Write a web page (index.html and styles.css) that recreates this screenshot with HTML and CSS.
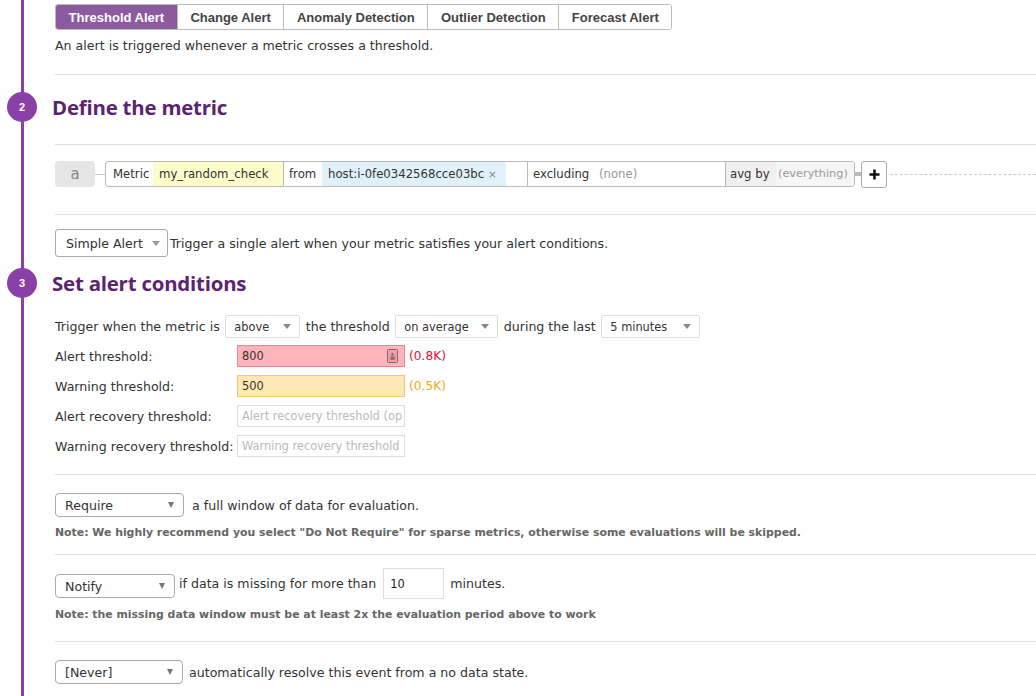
FILE: index.html
```html
<!DOCTYPE html>
<html>
<head>
<meta charset="utf-8">
<link rel="stylesheet" href="styles.css">
</head>
<body>
<div class="page">
  <div class="tabs">
    <button class="tab active">Threshold Alert</button>
    <button class="tab">Change Alert</button>
    <button class="tab">Anomaly Detection</button>
    <button class="tab">Outlier Detection</button>
    <button class="tab">Forecast Alert</button>
  </div>
  <p class="desc">An alert is triggered whenever a metric crosses a threshold.</p>
  <hr class="sep s1">

  <h2 class="step s2"><span class="num">2</span>Define the metric</h2>
  <hr class="sep s3">

  <div class="query">
    <span class="qname">a</span>
    <span class="qlink"></span>
    <div class="qbox">
      <span class="seg lbl-metric">Metric</span>
      <span class="seg metric">my_random_check</span>
      <span class="seg from">from</span>
      <span class="seg host">host:i-0fe0342568cce03bc <span class="x">×</span></span>
      <span class="seg blank"></span>
      <span class="seg excl">excluding <span class="muted">(none)</span></span>
      <span class="seg avg">avg by</span>
      <span class="seg ev">(everything)</span>
    </div>
    <span class="qlink2"></span>
    <button class="plus"><svg width="11" height="11" viewBox="0 0 11 11"><path d="M5.5 0.5v10M0.5 5.5h10" stroke="#111" stroke-width="2.6"/></svg></button>
    <span class="dash"></span>
  </div>
  <hr class="sep s4">

  <div class="typerow">
    <div class="sel sel-lg"><span>Simple Alert</span><span class="caret c-light"></span></div>
    <span>Trigger a single alert when your metric satisfies your alert conditions.</span>
  </div>

  <h2 class="step s5"><span class="num">3</span>Set alert conditions</h2>

  <div class="trigger">
    <span>Trigger when the metric is</span>
    <div class="sel sel-sm w-above"><span>above</span><span class="caret"></span></div>
    <span>the threshold</span>
    <div class="sel sel-sm w-avg"><span>on average</span><span class="caret"></span></div>
    <span>during the last</span>
    <div class="sel sel-sm w-min"><span>5 minutes</span><span class="caret"></span></div>
  </div>

  <div class="thresholds">
    <label>Alert threshold:</label>
    <div class="tcell">
      <div class="tin alert"><span>800</span>
        <svg class="kicon" width="11" height="14" viewBox="0 0 11 14"><rect x="0.5" y="0.5" width="10" height="13" rx="1" fill="#e9a0a8" stroke="#8a6a6e"/><path d="M5.5 3.2 L7.2 6.8 H3.8 Z" fill="#8a6a6e"/><rect x="3.3" y="7.6" width="4.4" height="3.2" fill="#8a6a6e"/></svg>
      </div>
      <span class="hint red">(0.8K)</span>
    </div>
    <label>Warning threshold:</label>
    <div class="tcell">
      <div class="tin warn"><span>500</span></div>
      <span class="hint orange">(0.5K)</span>
    </div>
    <label>Alert recovery threshold:</label>
    <div class="tcell">
      <div class="tin empty"><span>Alert recovery threshold (op</span></div>
    </div>
    <label>Warning recovery threshold:</label>
    <div class="tcell">
      <div class="tin empty"><span>Warning recovery threshold</span></div>
    </div>
  </div>
  <hr class="sep s6">

  <div class="optrow r-require">
    <div class="sel sel-md w-require"><span>Require</span><span class="caret c-dark"></span></div>
    <span>a full window of data for evaluation.</span>
  </div>
  <p class="note">Note: We highly recommend you select "Do Not Require" for sparse metrics, otherwise some evaluations will be skipped.</p>
  <hr class="sep s7">

  <div class="optrow r-notify">
    <div class="sel sel-md w-notify"><span>Notify</span><span class="caret c-dark"></span></div>
    <span>if data is missing for more than</span>
    <div class="numin">10</div>
    <span>minutes.</span>
  </div>
  <p class="note">Note: the missing data window must be at least 2x the evaluation period above to work</p>
  <hr class="sep s8">

  <div class="optrow r-never">
    <div class="sel sel-md w-never"><span>[Never]</span><span class="caret c-dark"></span></div>
    <span>automatically resolve this event from a no data state.</span>
  </div>
</div>
</body>
</html>
```

FILE: styles.css
```css
* { box-sizing: border-box; }
html, body { margin: 0; background: #fff; }
body {
  font-family: "DejaVu Sans", "Liberation Sans", sans-serif;
  font-size: 12.6px;
  color: #333;
}
.page {
  padding: 4px 0 0 55px;
  height: 696px;
  overflow: hidden;
  background: linear-gradient(#8b3fa8, #8b3fa8) no-repeat 21px 0 / 3px 100%;
}

/* tabs */
.tabs {
  display: inline-flex;
  border: 1px solid #bbb;
  border-radius: 3px;
  height: 26px;
  overflow: hidden;
}
.tab {
  font: bold 13px "Liberation Sans", Arial, sans-serif;
  color: #444;
  background: #fff;
  border: 0;
  border-left: 1px solid #bbb;
  padding: 0 12.6px;
  height: 24px;
  margin: 0;
}
.tab:first-child { border-left: 0; }
.tab.active { background: #8c5a9f; color: #fff; }

.desc { margin: 8px 0 0; line-height: 16px; }

.sep { border: 0; border-top: 1px solid #ddd; margin: 0; height: 0; }
.s1 { margin-top: 20px; }
.s3 { margin-top: 22px; }
.s4 { margin-top: 27px; }
.s6 { margin-top: 17px; }
.s7 { margin-top: 13px; }
.s8 { margin-top: 18px; }

/* step headings */
.step {
  display: flex;
  align-items: center;
  gap: 15px;
  margin: 0 0 0 -48px;
  height: 30px;
  font: 700 20.4px "Open Sans", sans-serif;
  color: #5a2471;
  letter-spacing: -0.2px;
}
.s2 { margin-top: 17px; }
.s5 { margin-top: 11px; }
.num {
  width: 30px;
  height: 30px;
  border-radius: 50%;
  background: #8b3fa8;
  color: #fff;
  font: bold 11px "Liberation Sans", Arial, sans-serif;
  display: flex;
  align-items: center;
  justify-content: center;
  letter-spacing: 0;
}

/* query builder */
.query {
  display: flex;
  align-items: center;
  height: 26px;
  margin-top: 16px;
  font-size: 11.7px;
}
.qname {
  width: 40px;
  height: 26px;
  background: #e6e6e6;
  border-radius: 4px;
  color: #888;
  font-size: 15px;
  display: flex;
  align-items: center;
  justify-content: center;
}
.qlink { width: 10px; height: 1px; background: #ccc; }
.qbox {
  display: flex;
  height: 26px;
  border: 1px solid #bbb;
  border-radius: 3px;
  overflow: hidden;
}
.seg {
  height: 24px;
  line-height: 24px;
  white-space: nowrap;
  overflow: hidden;
  color: #333;
}
.lbl-metric { width: 47px; padding-left: 7px; }
.metric { width: 130px; padding-left: 6px; background: #fdfdcc; }
.from { width: 39px; padding-left: 5px; border-left: 1px solid #bbb; }
.host { width: 184px; padding-left: 6px; background: #e1f1fa; }
.x { color: #888; font-size: 10.5px; }
.blank { width: 21px; }
.excl { width: 198px; padding-left: 5px; border-left: 1px solid #bbb; }
.muted { color: #999; margin-left: 6px; }
.avg { width: 51px; padding-left: 4px; border-left: 1px solid #bbb; background: #f0f0f0; }
.ev { width: 78px; padding-left: 2px; background: #f6f6f6; color: #999; font-size: 11.3px; }
.qlink2 { width: 6px; height: 4px; background: #bbb; }
.plus {
  width: 26px;
  height: 27px;
  border: 1px solid #aaa;
  border-radius: 3px;
  background: #fff;
  padding: 0;
  display: flex;
  align-items: center;
  justify-content: center;
}
.dash { flex: 1; margin-left: 3px; border-top: 1px dashed #ccc; }

/* selects */
.sel {
  display: flex;
  align-items: center;
  justify-content: space-between;
  background: #fff;
  flex: none;
}
.caret {
  width: 0;
  height: 0;
  border-left: 4px solid transparent;
  border-right: 4px solid transparent;
  border-top: 5px solid #888;
}
.c-light { border-top-color: #999; }
.c-dark {
  border-left-width: 3px;
  border-right-width: 3px;
  border-top: 6px solid #777;
}
.sel-lg {
  width: 113px;
  height: 28px;
  border: 1px solid #aaa;
  border-radius: 3px;
  padding: 0 7px 0 10px;
}
.sel-sm {
  height: 23px;
  border: 1px solid #ddd;
  border-radius: 2px;
  padding: 0 8px 0 8px;
  font-size: 11.4px;
}
.w-above { width: 75px; }
.w-avg { width: 103px; }
.w-min { width: 99px; }
.sel-md {
  height: 24px;
  border: 1px solid #aaa;
  border-radius: 4px;
  padding: 0 9px 0 9px;
}
.w-require { width: 129px; }
.w-notify { width: 120px; align-self: flex-end; margin-bottom: 1px; }
.w-never { width: 128px; }

.typerow {
  display: flex;
  align-items: center;
  gap: 2px;
  margin-top: 14px;
}

.trigger {
  display: flex;
  align-items: center;
  gap: 5.5px;
  margin-top: 17px;
}

/* thresholds */
.thresholds {
  display: grid;
  grid-template-columns: 182px auto;
  grid-auto-rows: 22px;
  row-gap: 8px;
  margin-top: 7px;
  align-items: center;
}
.tcell { display: flex; align-items: center; gap: 4px; }
.tin {
  width: 168px;
  height: 22px;
  border: 1px solid #ddd;
  padding: 0 4px;
  display: flex;
  align-items: center;
  justify-content: space-between;
  font-size: 11.4px;
  white-space: nowrap;
  overflow: hidden;
}
.tin.alert { background: #ffb3bb; border-color: #e58690; }
.tin.warn { background: #ffe8b6; border-color: #f0c670; }
.tin.empty { color: #bbb; }
.kicon { flex: none; margin-right: 2px; }
.hint { font-size: 12.2px; }
.red { color: #e0103a; }
.orange { color: #f5a623; }

/* options */
.optrow { display: flex; align-items: center; }
.r-require { margin-top: 18px; gap: 8px; }
.r-notify { margin-top: 13px; gap: 4px; height: 31px; }
.r-notify .numin { margin-left: 3px; }
.r-never { margin-top: 18px; gap: 6px; }
.numin {
  width: 61px;
  height: 31px;
  border: 1px solid #ddd;
  padding: 0 6px;
  display: flex;
  align-items: center;
  font-size: 11.4px;
  color: #222;
  margin-right: 2px;
}
.note {
  margin: 8px 0 0;
  line-height: 16px;
  font-weight: bold;
  font-size: 10.9px;
  color: #666;
}
```
